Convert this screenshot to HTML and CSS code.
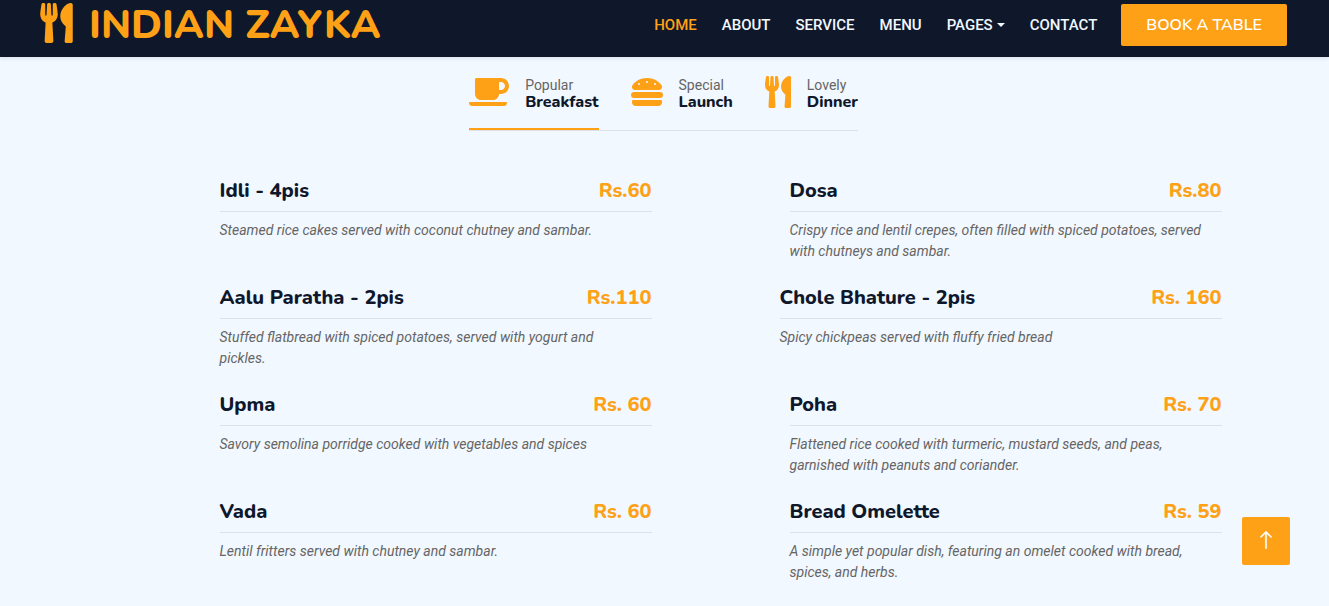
FILE: index.html
```html
<!DOCTYPE html>
<html lang="en">
<head>
<meta charset="utf-8">
<meta name="viewport" content="width=device-width, initial-scale=1">
<title>Indian Zayka</title>
<link rel="stylesheet" href="styles.css">
</head>
<body>
<svg class="sprite" aria-hidden="true">
  <symbol id="utensils" viewBox="0 0 416 512"><path d="M207.9 15.2c.8 4.7 16.1 94.5 16.1 128.8 0 52.3-27.8 89.6-68.9 104.6L168 486.7c.7 13.7-10.2 25.3-24 25.3H80c-13.7 0-24.7-11.5-24-25.3l12.9-238.1C27.7 233.6 0 196.2 0 144 0 109.6 15.3 19.9 16.1 15.2 19.3-5.1 61.4-5.4 64 16.3v141.2c1.3 3.4 15.1 3.2 16 0 1.4-25.3 7.9-139.2 8-141.8 3.3-20.8 44.7-20.8 47.9 0 .2 2.7 6.6 116.5 8 141.8.9 3.2 14.8 3.4 16 0V16.3c2.6-21.6 44.8-21.4 48-1.1zm119.2 285.7l-15 185.1c-1.2 14 9.9 26 23.9 26h56c13.3 0 24-10.7 24-24V24c0-13.2-10.7-24-24-24-82.5 0-221.4 178.5-64.9 300.9z"/></symbol>
</svg>

<header class="navbar">
  <a class="brand" href="#">
    <svg class="brand-icon" aria-hidden="true"><use href="#utensils"/></svg>
    <span>INDIAN ZAYKA</span>
  </a>
  <div class="nav">
    <nav class="nav-links">
      <a class="nav-link active" href="#">HOME</a>
      <a class="nav-link" href="#">ABOUT</a>
      <a class="nav-link" href="#">SERVICE</a>
      <a class="nav-link" href="#">MENU</a>
      <a class="nav-link dropdown" href="#">PAGES</a>
      <a class="nav-link" href="#">CONTACT</a>
    </nav>
    <a class="book" href="#">BOOK A TABLE</a>
  </div>
</header>

<main class="menu">
  <div class="tabs">
    <a class="tab active" href="#breakfast">
      <svg class="tab-icon cup" viewBox="0 0 640 512" aria-hidden="true"><path d="M192 384h192c53 0 96-43 96-96h32c70.6 0 128-57.4 128-128S582.6 32 512 32H120c-13.3 0-24 10.7-24 24v232c0 53 43 96 96 96zM512 96c35.3 0 64 28.7 64 64s-28.7 64-64 64h-32V96h32zm47.7 384H48.3c-47.6 0-61-64-36-64h583.3c25 0 11.8 64-35.9 64z"/></svg>
      <span class="tab-text"><small>Popular</small><strong>Breakfast</strong></span>
    </a>
    <a class="tab" href="#launch">
      <svg class="tab-icon" viewBox="0 0 512 512" aria-hidden="true"><path d="M464 256H48a48 48 0 0 0 0 96h416a48 48 0 0 0 0-96zm16 128H32a16 16 0 0 0-16 16v16a64 64 0 0 0 64 64h352a64 64 0 0 0 64-64v-16a16 16 0 0 0-16-16zM58.64 224h394.72c34.57 0 54.62-43.9 34.82-75.88C448 83.2 359.55 32.1 256 32c-103.54.1-192 51.2-232.18 116.11C4 180.09 24.07 224 58.64 224zM384 112a16 16 0 1 1-16 16 16 16 0 0 1 16-16zM256 80a16 16 0 1 1-16 16 16 16 0 0 1 16-16zm-128 32a16 16 0 1 1-16 16 16 16 0 0 1 16-16z"/></svg>
      <span class="tab-text"><small>Special</small><strong>Launch</strong></span>
    </a>
    <a class="tab" href="#dinner">
      <svg class="tab-icon fork" aria-hidden="true"><use href="#utensils"/></svg>
      <span class="tab-text"><small>Lovely</small><strong>Dinner</strong></span>
    </a>
  </div>

  <div class="dishes" id="breakfast">
    <article class="dish">
      <h2><span>Idli - 4pis</span><span class="price">Rs.60</span></h2>
      <p>Steamed rice cakes served with coconut chutney and sambar.</p>
    </article>
    <article class="dish">
      <h2><span>Dosa</span><span class="price">Rs.80</span></h2>
      <p>Crispy rice and lentil crepes, often filled with spiced potatoes, served with chutneys and sambar.</p>
    </article>
    <article class="dish">
      <h2><span>Aalu Paratha - 2pis</span><span class="price">Rs.110</span></h2>
      <p>Stuffed flatbread with spiced potatoes, served with yogurt and pickles.</p>
    </article>
    <article class="dish wide">
      <h2><span>Chole Bhature - 2pis</span><span class="price">Rs. 160</span></h2>
      <p>Spicy chickpeas served with fluffy fried bread</p>
    </article>
    <article class="dish">
      <h2><span>Upma</span><span class="price">Rs. 60</span></h2>
      <p>Savory semolina porridge cooked with vegetables and spices</p>
    </article>
    <article class="dish">
      <h2><span>Poha</span><span class="price">Rs. 70</span></h2>
      <p>Flattened rice cooked with turmeric, mustard seeds, and peas, garnished with peanuts and coriander.</p>
    </article>
    <article class="dish">
      <h2><span>Vada</span><span class="price">Rs. 60</span></h2>
      <p>Lentil fritters served with chutney and sambar.</p>
    </article>
    <article class="dish">
      <h2><span>Bread Omelette</span><span class="price">Rs. 59</span></h2>
      <p>A simple yet popular dish, featuring an omelet cooked with bread, spices, and herbs.</p>
    </article>
  </div>
</main>

<a class="to-top" href="#" aria-label="Back to top">
  <svg viewBox="0 0 16 16" aria-hidden="true"><path d="M8 15a.5.5 0 0 0 .5-.5V2.707l3.146 3.147a.5.5 0 0 0 .708-.708l-4-4a.5.5 0 0 0-.708 0l-4 4a.5.5 0 1 0 .708.708L7.5 2.707V14.5a.5.5 0 0 0 .5.5z"/></svg>
</a>
</body>
</html>
```
FILE: styles.css
```css
:root {
  --primary: #fea116;
  --light: #f1f8ff;
  --dark: #0f172b;
  --muted: #666565;
  --line: #dee2e6;
  --heading: Nunito, Lato, sans-serif;
}

* {
  box-sizing: border-box;
}

body {
  margin: 0;
  background: var(--light);
  color: var(--muted);
  font-family: Roboto, sans-serif;
  font-size: 16px;
  line-height: 24px;
}

a {
  color: inherit;
  text-decoration: none;
}

svg {
  display: block;
  fill: currentColor;
}

.sprite {
  display: none;
}

.navbar {
  position: sticky;
  top: 0;
  z-index: 1;
  display: flex;
  align-items: center;
  justify-content: space-between;
  padding: 3px 42px 10px 40px;
  background: var(--dark);
  box-shadow: 0 2px 4px rgba(0, 0, 0, 0.08);
}

.brand {
  display: flex;
  align-items: flex-start;
  gap: 16px;
  color: var(--primary);
  font-family: var(--heading);
  font-size: 40px;
  font-weight: 800;
  line-height: 44px;
}

.brand-icon {
  width: 33px;
  height: 40px;
}

.nav {
  display: flex;
  align-items: center;
  gap: 24px;
}

.nav-links {
  display: flex;
  gap: 25px;
}

.nav-link {
  color: var(--light);
  font-size: 15px;
  font-weight: 500;
}

.nav-link.active {
  color: var(--primary);
}

.dropdown {
  display: flex;
  align-items: center;
  gap: 4px;
}

.dropdown::after {
  content: "";
  border: 4px solid transparent;
  border-top-color: currentColor;
  border-bottom: 0;
}

.book {
  padding: 9px 25px;
  border-radius: 2px;
  background: var(--primary);
  color: #fff;
  font-family: var(--heading);
  font-size: 16px;
  font-weight: 600;
}

.menu {
  display: flex;
  flex-direction: column;
  align-items: center;
  padding: 16px 14px 24px 12px;
}

.tabs {
  display: flex;
  gap: 32px;
  margin-bottom: 48px;
  border-bottom: 1px solid var(--line);
}

.tab {
  display: flex;
  align-items: center;
  gap: 16px;
  padding-bottom: 17px;
  border-bottom: 2px solid transparent;
}

.tab.active {
  border-color: var(--primary);
}

.tab-icon {
  width: 32px;
  height: 32px;
  color: var(--primary);
}

.tab-icon.cup {
  width: 40px;
}

.tab-icon.fork {
  width: 26px;
}

.tab-text {
  display: flex;
  flex-direction: column;
}

.tab-text small {
  font-size: 14px;
}

.tab-text strong {
  margin-top: -4px;
  color: var(--dark);
  font-family: var(--heading);
  font-size: 16px;
  font-weight: 800;
  line-height: 18px;
}

.dishes {
  display: grid;
  grid-template-columns: 1fr 1fr;
  row-gap: 24px;
  width: 100%;
  max-width: 1140px;
}

.dish {
  padding: 0 12px 0 126px;
}

.dish.wide {
  padding-left: 116px;
}

.dish h2 {
  display: flex;
  justify-content: space-between;
  margin: 0 0 8px;
  padding-bottom: 8px;
  border-bottom: 1px solid var(--line);
  color: var(--dark);
  font-family: var(--heading);
  font-size: 20px;
  font-weight: 800;
  line-height: 24px;
}

.dish .price {
  color: var(--primary);
}

.dish p {
  margin: 0;
  padding-right: 12px;
  font-size: 14px;
  font-style: italic;
  line-height: 21px;
}

.to-top {
  position: fixed;
  right: 39px;
  bottom: 41px;
  display: flex;
  justify-content: center;
  padding-top: 13px;
  width: 48px;
  height: 48px;
  border-radius: 2px;
  background: var(--primary);
  color: #fff;
}

.to-top svg {
  width: 20px;
  height: 20px;
  stroke: currentColor;
  stroke-width: 0.4;
}
```
